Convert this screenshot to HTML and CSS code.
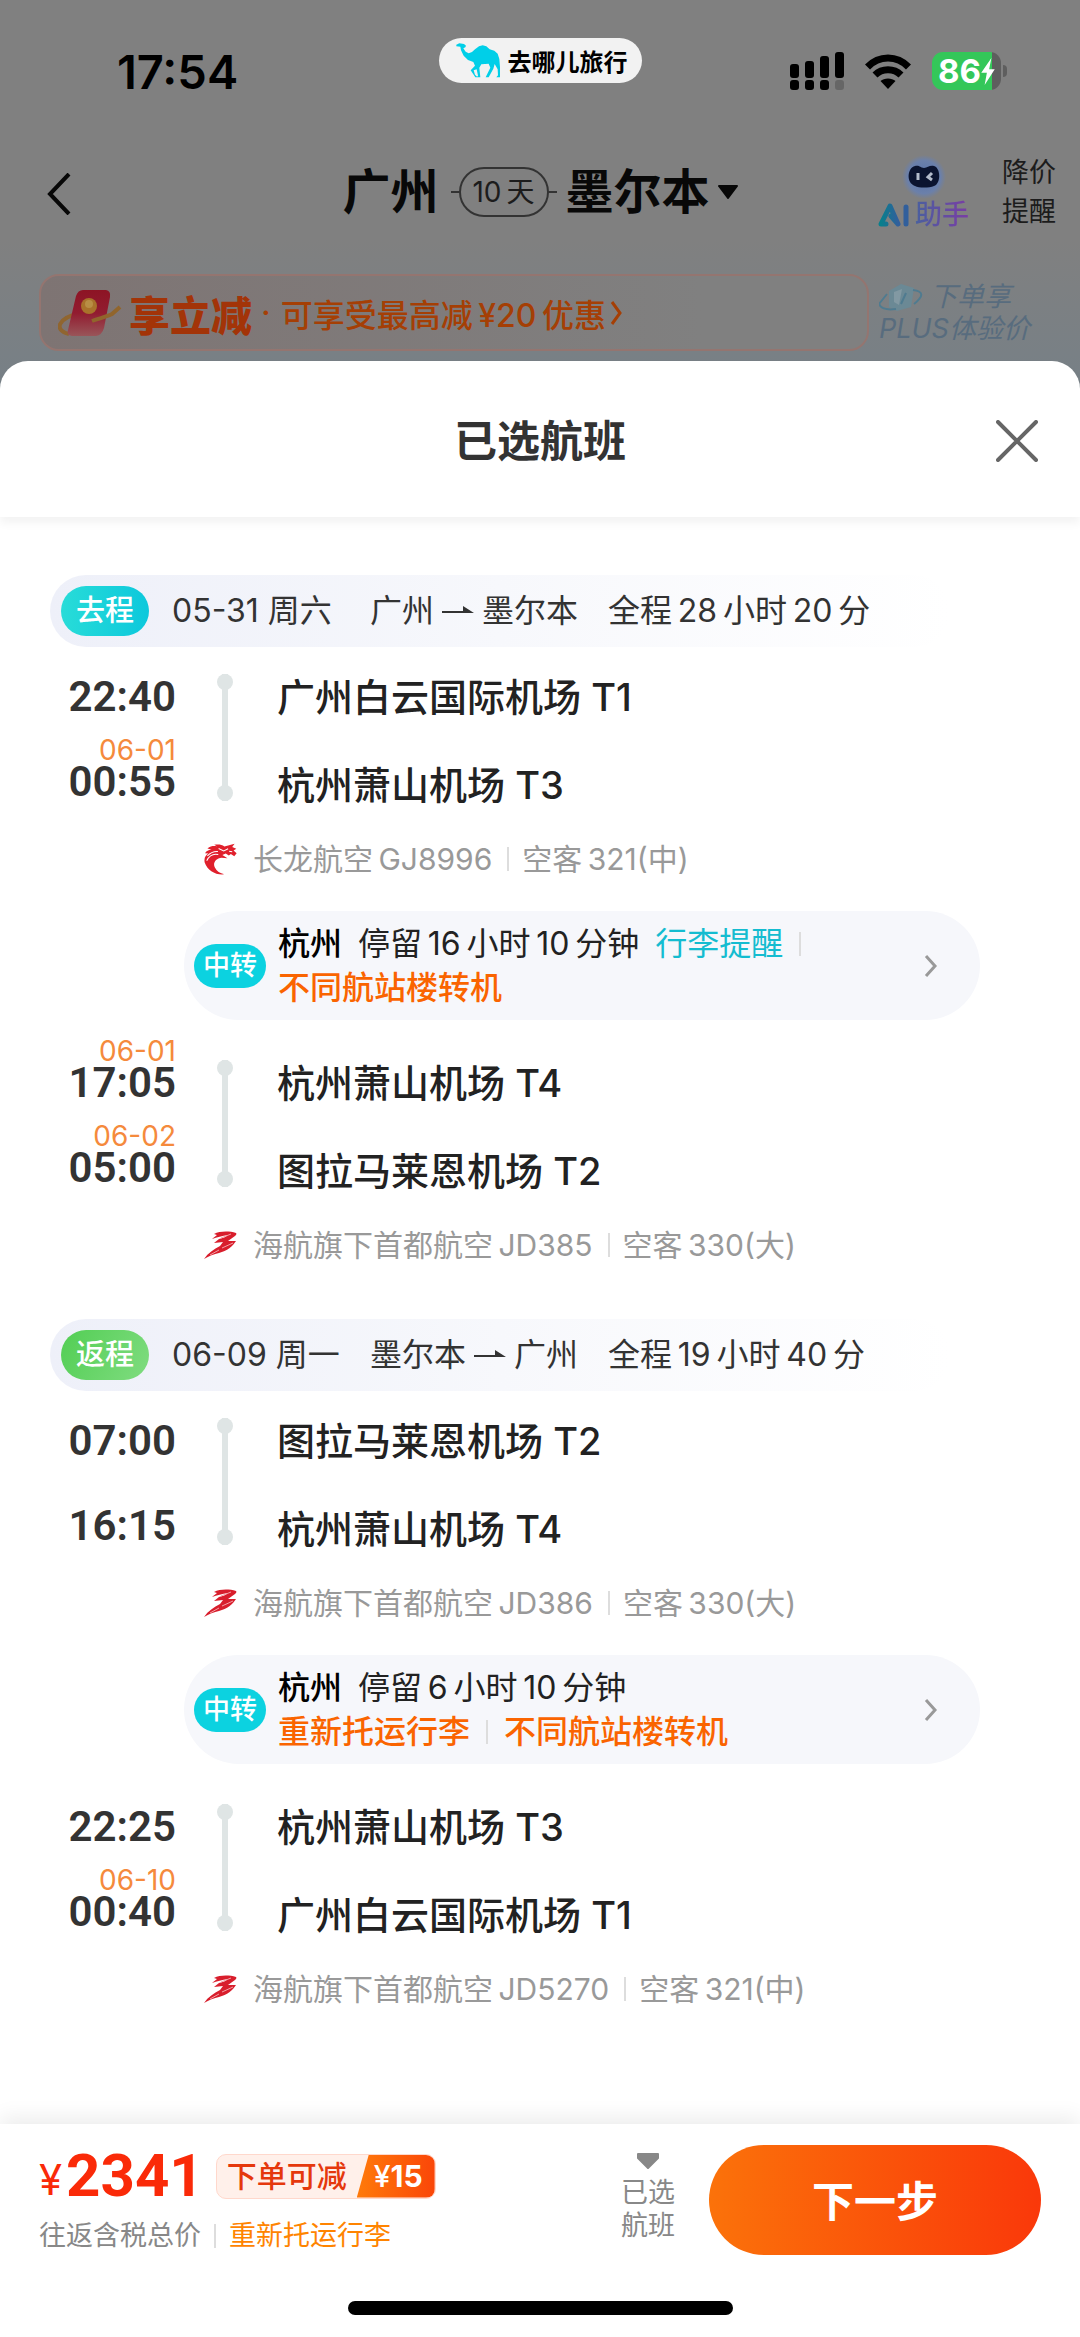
FILE: index.html
```html
<!DOCTYPE html>
<html lang="zh-CN">
<head>
<meta charset="utf-8">
<meta name="viewport" content="width=device-width, initial-scale=1">
<title>已选航班</title>
<link rel="stylesheet" href="styles.css">
</head>
<body>
<svg class="defs" aria-hidden="true">
  <defs>
    <linearGradient id="ai" x1="0" x2="1"><stop offset="0" stop-color="#087f8c"/><stop offset="1" stop-color="#315f9c"/></linearGradient>
    <radialGradient id="halo"><stop offset="0" stop-color="#5873ac"/><stop offset=".75" stop-color="#6b80aa"/><stop offset="1" stop-color="#808080"/></radialGradient>
    <linearGradient id="packet" x1="0" y1="0" x2="0" y2="1"><stop offset="0" stop-color="#8d1424"/><stop offset=".5" stop-color="#921c30"/><stop offset="1" stop-color="#995559"/></linearGradient>
  </defs>
  <symbol id="capital" viewBox="0 0 34 28">
    <path fill="#d81e2c" d="M10 3C16 0 25 0 32 2C33 3 32 4 31 5L24 10L32 10C29 15 23 20 15 22C10 23 5 25 0 28C4 22 10 18 16 15L19 11L10 12L15 8C19 7 22 6 24 4C18 5 13 6 8 8C10 6 12 5 13 4Z"/>
    <path fill="none" stroke="#f3a0a6" stroke-width="1" d="M17 7L27 3M18 17L29 12M6 24L15 19"/>
  </symbol>
  <symbol id="dragon" viewBox="74 67 100 94">
    <path fill="#e0202c" d="M134 159C108 162 84 147 76 124C73 110 80 102 87 98L77 97C81 89 91 87 96 86L84 83C94 75 105 75 113 77L104 72C116 70 126 71 134 77L145 74L164 69L157 79L169 84L161 89L170 97L163 106L153 99L147 104L138 98L128 102L143 112L126 110C108 112 99 126 106 139C111 150 121 156 134 159Z"/>
    <path fill="none" stroke="#fff" stroke-width="3" d="M84 105C94 94 104 91 115 92M82 119C90 103 103 98 116 101M117 83L132 90L145 84M148 91L157 93"/>
  </symbol>
</svg>
<div class="page">
  <div class="status">
    <time class="clock">17:54</time>
    <div class="app-pill">
      <svg width="46" height="36" viewBox="75 40 138 108" aria-hidden="true"><path fill="#00cfe8" d="M76 45L85 41L99 43L105 48L103 53L97 56L104 66L113 71L123 67L132 59L144 50L155 47L166 50L176 59L190 63L200 72L205 88L207 112V143H196L201 137L200 119L191 103L187 117L173 143H164L178 114L173 102L151 104L145 114L148 143H137L141 138L137 119L128 122L132 135L140 143H133L119 122L132 108L127 97L111 91L98 78L90 62L88 51L76 50Z"/></svg>
      <span>去哪儿旅行</span>
    </div>
    <div class="indicators">
      <svg width="54" height="38" viewBox="0 0 54 38" aria-hidden="true"><rect y="12" width="9" height="14" rx="3"/><rect x="15" y="9" width="9" height="17" rx="3"/><rect x="30" y="4" width="9" height="22" rx="3"/><rect x="45" width="9" height="26" rx="3"/><rect y="28" width="9" height="10" rx="3"/><rect x="15" y="28" width="9" height="10" rx="3"/><rect x="30" y="28" width="9" height="10" rx="3"/><rect x="45" y="28" width="9" height="10" rx="3" fill="#666"/></svg>
      <svg width="46" height="35" viewBox="0 0 46 35" aria-hidden="true"><g fill="none" stroke="#000" stroke-width="7"><path d="M2.5 13C14 1 32 1 43.500 13"/><path d="M10 21C17 14 29 14 36 21"/></g><path d="M15.500 27C19 23.500 27 23.500 30.500 27L23 35Z"/></svg>
      <div class="battery"><span>86</span><svg width="14" height="27" viewBox="0 0 12 24" aria-hidden="true"><path fill="#fff" d="M9 0L0 13H5L3 24L12 10H7Z"/></svg></div>
    </div>
  </div>
  <div class="nav">
    <button class="icon-button back" aria-label="返回"><svg width="24" height="42" viewBox="0 0 24 42"><path fill="none" stroke="#080808" stroke-width="4" d="M22 1L3 21L22 41"/></svg></button>
    <div class="route"><span>广州</span><span class="days">10&#8201;天</span><span>墨尔本</span><svg width="20" height="14" viewBox="0 0 20 14" aria-hidden="true"><path fill="#080808" stroke="#080808" stroke-width="2" stroke-linejoin="round" d="M1 1H19L10 13Z"/></svg></div>
    <div class="nav-links">
      <a class="assistant" href="#assistant" aria-label="AI 助手">
        <svg width="44" height="46" viewBox="0 0 44 46" aria-hidden="true"><circle cx="22" cy="23" r="22" fill="url(#halo)"/><path fill="#0b1430" d="M13 12C18 11 18 14 22 14S27 11 32 12C39 14 39 30 32 32C27 34 17 34 13 32C4 29 5 14 13 12Z"/><path stroke="#b4bccb" stroke-width="3" fill="none" d="M16 19V26M30 19L26 23L30 26"/></svg>
        <span class="assistant-name"><svg width="32" height="24" viewBox="0 0 32 24" aria-hidden="true"><path fill="none" stroke="url(#ai)" stroke-width="5" stroke-linecap="round" stroke-linejoin="round" d="M8 21H3L12 3L20 21L13 13"/><path fill="none" stroke="#315f9c" stroke-width="5" stroke-linecap="round" d="M28 4V21"/></svg><span>助手</span></span>
      </a>
      <a class="alert" href="#alert">降价<br>提醒</a>
    </div>
  </div>
  <div class="promos">
    <a class="banner" href="#discount">
      <svg width="64" height="48" viewBox="0 0 64 48" aria-hidden="true"><path fill="none" stroke="#90652f" stroke-width="4" d="M22 24C0 29-5 41 11 45"/><path fill="url(#packet)" d="M25 1H48Q53 2 52 8L46 39Q44 46 38 47H14Q8 46 10 41L18 7Q20 1 25 1Z"/><circle cx="31" cy="17" r="8" fill="#a9722b"/><circle cx="31" cy="15" r="4" fill="#b88e45"/><path fill="none" stroke="#91652c" stroke-width="4" d="M34 32C42 29 48 28 54 25L62 18"/></svg>
      <strong>享立减</strong><span>·</span><span class="saving">可享受最高减&#8201;¥20&#8201;优惠</span>
      <svg width="13" height="26" viewBox="0 0 13 26" aria-hidden="true"><path fill="none" stroke="#a53f05" stroke-width="3" d="M2 2L10 13L2 24"/></svg>
    </a>
    <a class="plus" href="#plus"><span class="plus-row"><svg width="44" height="28" viewBox="0 0 44 28" aria-hidden="true"><path fill="#6b8995" d="M10 8L22 1L35 5L32 24L18 28L10 24Z"/><path fill="#8299a3" d="M15 9L23 6L20 22L15 19Z"/><path fill="none" stroke="#4f7b90" stroke-width="2" d="M22 21L27 10M8 11L0 21Q3 28 17 26M34 7Q50 9 35 21"/></svg>下单享</span>PLUS体验价</a>
  </div>

  <main class="sheet">
    <header class="sheet-head"><h1>已选航班</h1><button class="icon-button close" aria-label="关闭"><svg width="42" height="42" viewBox="0 0 42 42"><path fill="none" stroke="#666" stroke-width="4" stroke-linecap="round" d="M2 2L40 40M40 2L2 40"/></svg></button></header>
    <section class="journey">
      <h2 class="direction"><span class="tag out">去程</span><span class="date">05-31 周六</span><span class="path">广州<svg class="arrow" viewBox="0 0 32 10" aria-hidden="true"><path fill="#333" d="M0 5H21V0L32 7H0Z"/></svg>墨尔本</span><span>全程&#8201;28&#8201;小时&#8201;20&#8201;分</span></h2>
      <div class="leg">
        <div class="times"><div class="stop"><time>22:40</time></div><div class="stop"><small>06-01</small><time>00:55</time></div></div>
        <div class="rail"></div>
        <div class="ports"><div>广州白云国际机场 T1</div><div>杭州萧山机场 T3</div></div>
      </div>
      <div class="plane"><svg width="34" height="32" aria-hidden="true"><use href="#dragon"/></svg><span>长龙航空&#8201;GJ8996</span><i></i><span>空客&#8201;321(中)</span></div>
      <div class="transfer"><span class="tag mid">中转</span>
        <div class="notes"><div><b>杭州</b><span>停留&#8201;16&#8201;小时&#8201;10&#8201;分钟</span><a href="#baggage">行李提醒</a><i></i></div><div class="warn"><span>不同航站楼转机</span></div></div>
        <button class="icon-button" aria-label="中转详情"><svg width="14" height="24" viewBox="0 0 14 24"><path fill="none" stroke="#999" stroke-width="3" d="M2 2L11 12L2 22"/></svg></button></div>
      <div class="leg">
        <div class="times"><div class="stop"><small>06-01</small><time>17:05</time></div><div class="stop"><small>06-02</small><time>05:00</time></div></div>
        <div class="rail"></div>
        <div class="ports"><div>杭州萧山机场 T4</div><div>图拉马莱恩机场 T2</div></div>
      </div>
      <div class="plane"><svg width="34" height="28" aria-hidden="true"><use href="#capital"/></svg><span>海航旗下首都航空&#8201;JD385</span><i></i><span>空客&#8201;330(大)</span></div>
    </section>
    <section class="journey">
      <h2 class="direction"><span class="tag back-trip">返程</span><span class="date">06-09 周一</span><span class="path">墨尔本<svg class="arrow" viewBox="0 0 32 10" aria-hidden="true"><path fill="#333" d="M0 5H21V0L32 7H0Z"/></svg>广州</span><span>全程&#8201;19&#8201;小时&#8201;40&#8201;分</span></h2>
      <div class="leg">
        <div class="times"><div class="stop"><time>07:00</time></div><div class="stop"><time>16:15</time></div></div>
        <div class="rail"></div>
        <div class="ports"><div>图拉马莱恩机场 T2</div><div>杭州萧山机场 T4</div></div>
      </div>
      <div class="plane"><svg width="34" height="28" aria-hidden="true"><use href="#capital"/></svg><span>海航旗下首都航空&#8201;JD386</span><i></i><span>空客&#8201;330(大)</span></div>
      <div class="transfer"><span class="tag mid">中转</span>
        <div class="notes"><div><b>杭州</b><span>停留&#8201;6&#8201;小时&#8201;10&#8201;分钟</span></div><div class="warn"><span>重新托运行李</span><i></i><span>不同航站楼转机</span></div></div>
        <button class="icon-button" aria-label="中转详情"><svg width="14" height="24" viewBox="0 0 14 24"><path fill="none" stroke="#999" stroke-width="3" d="M2 2L11 12L2 22"/></svg></button></div>
      <div class="leg">
        <div class="times"><div class="stop"><time>22:25</time></div><div class="stop"><small>06-10</small><time>00:40</time></div></div>
        <div class="rail"></div>
        <div class="ports"><div>杭州萧山机场 T3</div><div>广州白云国际机场 T1</div></div>
      </div>
      <div class="plane"><svg width="34" height="28" aria-hidden="true"><use href="#capital"/></svg><span>海航旗下首都航空&#8201;JD5270</span><i></i><span>空客&#8201;321(中)</span></div>
    </section>
    <footer class="checkout">
      <div class="actions">
        <div class="total">
          <div class="price-row"><span class="yen">¥</span><strong>2341</strong><span class="coupon"><span>下单可减</span><b>¥<em>15</em></b></span></div>
          <div class="price-note"><span>往返含税总价</span><i></i><span class="luggage">重新托运行李</span></div>
        </div>
        <button class="selected"><svg width="22" height="16" viewBox="0 0 22 16" aria-hidden="true"><path fill="#888" stroke="#888" stroke-width="2" stroke-linejoin="round" d="M1 1H21V5L11 15L1 5Z"/></svg><span>已选<br>航班</span></button>
        <button class="next">下一步</button>
      </div>
      <div class="home-bar"></div>
    </footer>
  </main>
</div>
</body>
</html>
```
FILE: styles.css
```css
* { box-sizing: border-box; }
body { margin: 0; font-family: Inter, "Noto Sans CJK SC", sans-serif; color: #222; }
button { border: 0; padding: 0; background: none; font: inherit; color: inherit; }
a { color: inherit; text-decoration: none; }
svg { display: block; flex: none; }
i { flex: none; width: 2px; height: 24px; background: #ddd; }
.defs { position: absolute; width: 0; height: 0; }
.icon-button { display: flex; }
.page { min-height: 100vh; display: flex; flex-direction: column; background: linear-gradient(#808080 240px, #768087 400px); }

.status { display: grid; grid-template-columns: 1fr auto 1fr; align-items: start; padding: 38px 79px 0 117px; height: 120px; }
.clock { padding-top: 9px; font-size: 47px; line-height: 50px; font-weight: 600; color: #000; }
.app-pill { display: flex; align-items: center; gap: 6px; width: 203px; height: 45px; padding-left: 17px; margin-right: 38px; border-radius: 23px; background: #f2f2f2; color: #000; font-size: 24px; font-weight: 700; white-space: nowrap; }
.indicators { display: flex; justify-content: flex-end; align-items: center; gap: 21px; padding-top: 14px; }
.battery { position: relative; display: flex; align-items: center; justify-content: center; width: 69px; height: 38px; border-radius: 11px; background: linear-gradient(90deg, #34c759 60px, #5e5e5e 60px); color: #fff; font-size: 33px; font-weight: 700; }
.battery::after { content: ""; position: absolute; right: -6px; top: 13px; width: 4px; height: 12px; border-radius: 0 4px 4px 0; background: #5e5e5e; }

.nav { display: grid; grid-template-columns: 1fr auto 1fr; align-items: center; height: 154px; padding: 0 24px 10px; }
.back { padding: 4px 0 0 23px; }
.route { display: flex; align-items: center; color: #080808; font-size: 48px; font-weight: 700; line-height: 70px; white-space: nowrap; }
.route svg { margin-left: 8px; }
.days { position: relative; width: 90px; height: 50px; margin: 0 17px 0 20px; border: 2px solid #333; border-radius: 25px; text-align: center; font-size: 28px; line-height: 46px; font-weight: 400; color: #1c1c1c; }
.days::before, .days::after { content: ""; position: absolute; top: 22px; width: 10px; height: 2px; background: #333; }
.days::before { right: 100%; }
.days::after { left: 100%; }
.nav-links { display: flex; justify-content: flex-end; align-items: center; gap: 33px; }
.assistant { display: flex; flex-direction: column; align-items: center; }
.assistant-name { display: flex; align-items: center; gap: 5px; font-size: 27px; line-height: 30px; font-weight: 500; }
.assistant-name span { background: linear-gradient(90deg, #49609f, #7a3ca5); background-clip: text; color: transparent; }
.alert { font-size: 27px; line-height: 39px; color: #1c1c1c; }

.promos { display: flex; align-items: center; height: 77px; margin-bottom: 10px; padding: 0 40px 0 39px; gap: 10px; white-space: nowrap; }
.banner { flex: 1; display: flex; align-items: center; height: 77px; padding-left: 17px; border: 2px solid #947570; border-radius: 20px; background: linear-gradient(90deg, #7e7473, #808080 80%); color: #a53f05; font-size: 32px; font-weight: 500; }
.banner strong { margin: 0 9px 0 7px; color: #a33408; font-size: 41px; font-weight: 900; }
.saving { margin: 0 4px 0 10px; }
.plus { flex: 0 0 161px; color: #586c7e; font-size: 27px; line-height: 32px; font-style: italic; }
.plus-row { display: flex; align-items: center; gap: 7px; }

.sheet { flex: 1; display: flex; flex-direction: column; border-radius: 28px 28px 0 0; background: #fff; }
.sheet-head { display: grid; grid-template-columns: 1fr auto 1fr; align-items: center; height: 156px; padding: 4px 42px 0; margin-bottom: 58px; box-shadow: 0 6px 10px rgba(0, 0, 0, .05); border-radius: 28px 28px 0 0; }
.sheet-head h1 { grid-column: 2; margin: 0; font-size: 43px; line-height: 60px; font-weight: 700; color: #333; }
.close { justify-self: end; }
.journey { margin-bottom: 54px; }
.direction { display: flex; align-items: center; gap: 30px; height: 72px; margin: 0 130px 6px 50px; padding-left: 11px; border-radius: 36px; background: linear-gradient(90deg, #eef0f9, #f7f8fc 50%, #fff); font-size: 32px; line-height: 40px; font-weight: 400; color: #333; white-space: nowrap; }
.date { min-width: 168px; }
.path { display: flex; align-items: center; }
.arrow { width: 32px; height: 10px; margin: 0 8px; }
.tag { flex: none; border-radius: 25px; color: #fff; text-align: center; font-weight: 500; }
.direction .tag { width: 88px; height: 50px; margin-right: -7px; font-size: 29px; line-height: 50px; }
.out { background: linear-gradient(90deg, #28dcd8, #0cc8dc); }
.back-trip { background: linear-gradient(120deg, #52ce54, #80dc80); }
.leg { display: grid; grid-template-columns: 176px 97px 1fr; padding-right: 40px; }
.times { display: flex; flex-direction: column; gap: 21px; text-align: right; }
.stop { display: flex; flex-direction: column; justify-content: flex-end; height: 64px; }
.stop small { font-size: 28px; line-height: 24px; color: #f58a3c; }
.stop time { font-family: Roboto, sans-serif; font-size: 42px; line-height: 40px; font-weight: 600; color: #333; }
.rail { position: relative; justify-self: center; width: 6px; height: 127px; margin-top: 21px; background: #dfe5e5; }
.rail::before, .rail::after { content: ""; position: absolute; left: -5px; width: 16px; height: 16px; border-radius: 50%; background: #dfe5e5; }
.rail::before { top: 0; }
.rail::after { bottom: 0; }
.ports { display: flex; flex-direction: column; gap: 36px; padding: 18px 0 0 4px; font-size: 38px; line-height: 52px; font-weight: 500; }
.plane { display: flex; align-items: center; gap: 15px; margin: 28px 40px 0 204px; font-size: 30px; line-height: 40px; color: #999; }
.plane i { margin-right: -2px; }
.transfer { display: flex; align-items: center; min-height: 109px; margin: 32px 100px 19px 184px; padding: 0 42px 0 10px; border-radius: 55px; background: #f6f7fb; font-size: 32px; line-height: 44px; }
.mid { width: 72px; height: 44px; background: #0cd2e0; font-size: 27px; line-height: 44px; }
.notes { flex: 1; padding-left: 12px; }
.notes div { display: flex; align-items: center; gap: 16px; }
.notes b { font-weight: 500; color: #000; }
.notes a { color: #14bcd0; }
.notes .warn { color: #fa6400; font-weight: 500; }

.checkout { margin-top: auto; padding: 21px 39px 22px; background: #fff; box-shadow: 0 -6px 20px rgba(0, 0, 0, .08); }
.actions { display: flex; align-items: center; height: 110px; }
.total { flex: 1; }
.price-row { display: flex; align-items: center; height: 62px; color: #fa2a08; }
.yen { padding: 8px 4px 0 0; font-size: 42px; line-height: 48px; }
.price-row strong { font-family: Roboto, sans-serif; font-size: 60px; line-height: 62px; }
.coupon { display: flex; align-items: center; height: 45px; margin-left: 12px; padding-left: 10px; border-radius: 10px; background: #fff0ea; overflow: hidden; border: 1px solid #ffd8cc; color: #e5380c; font-size: 30px; line-height: 43px; font-weight: 500; white-space: nowrap; }
.coupon b { margin-left: 10px; padding: 0 12px 0 17px; background: linear-gradient(90deg, #ff7a0a, #fa4608); clip-path: polygon(12px 0, 100% 0, 100% 100%, 0 100%); color: #fff; font-weight: 500; }
.coupon em { font-style: normal; font-weight: 700; }
.price-note { display: flex; align-items: center; gap: 13px; padding-top: 10px; font-size: 27px; line-height: 38px; color: #888; }
.luggage { color: #ff8400; }
.selected { display: flex; flex-direction: column; align-items: center; gap: 7px; margin: 0 34px 6px 0; font-size: 27px; line-height: 33px; color: #888; }
.next { width: 332px; height: 110px; padding-bottom: 3px; border-radius: 55px; background: linear-gradient(90deg, #fb720a, #fa380a); color: #fff; font-size: 42px; font-weight: 700; }
.home-bar { width: 385px; height: 14px; margin: 46px auto 0; border-radius: 7px; background: #000; }
```
